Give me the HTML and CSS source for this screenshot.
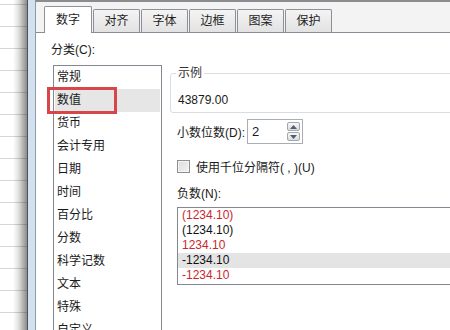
FILE: index.html
```html
<!DOCTYPE html>
<html lang="zh-CN">
<head>
<meta charset="utf-8">
<title>设置单元格格式</title>
<link rel="stylesheet" href="styles.css">
</head>
<body>
<div class="screen">
  <div class="sheet"><div class="shadow"></div></div>
  <div class="frame">
    <div class="dialog">
      <div class="tabs">
        <div class="tab active">数字</div>
        <div class="tab">对齐</div>
        <div class="tab">字体</div>
        <div class="tab">边框</div>
        <div class="tab">图案</div>
        <div class="tab">保护</div>
      </div>
      <div class="panel">
        <div class="left">
          <div class="label">分类(C):</div>
          <div class="catlist">
            <div class="cat">常规</div>
            <div class="cat selected">数值</div>
            <div class="cat">货币</div>
            <div class="cat">会计专用</div>
            <div class="cat">日期</div>
            <div class="cat">时间</div>
            <div class="cat">百分比</div>
            <div class="cat">分数</div>
            <div class="cat">科学记数</div>
            <div class="cat">文本</div>
            <div class="cat">特殊</div>
            <div class="cat">自定义</div>
          </div>
        </div>
        <div class="right">
          <fieldset class="sample">
            <legend>示例</legend>
            <div class="sample-value">43879.00</div>
          </fieldset>
          <div class="decimals">
            <span class="dec-label">小数位数(D):</span>
            <div class="spin">
              <span class="spin-value">2</span>
              <div class="spin-btns">
                <div class="spin-btn"><svg width="7" height="4" viewBox="0 0 7 4"><path d="M0 4 L3.5 0 L7 4 Z" fill="#4e5d78"/></svg></div>
                <div class="spin-btn"><svg width="7" height="4" viewBox="0 0 7 4"><path d="M0 0 L7 0 L3.5 4 Z" fill="#4e5d78"/></svg></div>
              </div>
            </div>
          </div>
          <div class="check-row">
            <span class="checkbox"></span>
            <span>使用千位分隔符( , )(U)</span>
          </div>
          <div class="label neg-label">负数(N):</div>
          <div class="neglist">
            <div class="neg red">(1234.10)</div>
            <div class="neg">(1234.10)</div>
            <div class="neg red">1234.10</div>
            <div class="neg selected">-1234.10</div>
            <div class="neg red">-1234.10</div>
          </div>
        </div>
      </div>
    </div>
  </div>
  <div class="callout"></div>
</div>
</body>
</html>
```
FILE: styles.css
```css
html, body {
  margin: 0;
  padding: 0;
  background: #ffffff;
}

body {
  font-family: "Liberation Sans", "Noto Sans CJK SC", sans-serif;
  font-size: 12px;
  color: #1a1a1a;
}

.screen {
  position: relative;
  width: 450px;
  height: 330px;
  overflow: hidden;
  display: flex;
}

.sheet {
  position: relative;
  flex: none;
  width: 27px;
  height: 330px;
  background-color: #ffffff;
  background-image: repeating-linear-gradient(to bottom, transparent 0 21px, #d6d6d6 21px 22px);
  background-position: 0 -17px;
}

.shadow {
  position: absolute;
  top: 0;
  right: 0;
  width: 14px;
  height: 100%;
  background: linear-gradient(to right, rgba(0,0,0,0), rgba(0,0,0,0.12) 40%, rgba(0,0,0,0.45));
}

.frame {
  flex: none;
  display: flex;
  border-left: 1px solid #4f5358;
  padding-left: 7px;
  background: #d3e0ee;
}

.dialog {
  flex: none;
  width: 440px;
  border-left: 1px solid #8d99a6;
  border-top: 2px solid #8a8c90;
  background: #ffffff;
  display: flex;
  flex-direction: column;
  overflow: hidden;
}

.tabs {
  flex: none;
  display: flex;
  align-items: flex-end;
  gap: 1px;
  height: 30px;
  padding-left: 8px;
  background: #f3f3f3;
  border-bottom: 1px solid #898c95;
}

.tab {
  box-sizing: border-box;
  width: 47px;
  height: 23px;
  border: 1px solid #8e9097;
  border-bottom: none;
  border-radius: 2px 2px 0 0;
  background: linear-gradient(to bottom, #f4f4f4, #e2e2e2);
  text-align: center;
  line-height: 22px;
  color: #1e1e1e;
}

.tab.active {
  width: 48px;
  height: 27px;
  margin-bottom: -1px;
  background: #ffffff;
  line-height: 26px;
  padding-bottom: 3px;
}

.panel {
  display: flex;
  align-items: flex-start;
  padding: 9px 0 0 15px;
  background: #ffffff;
  flex: 1;
}

.label {
  line-height: 16px;
  height: 16px;
}

.left {
  flex: none;
}

.catlist {
  margin: 7px 0 0 2px;
  width: 107px;
  height: 290px;
  border: 1px solid #828790;
  padding-top: 0;
}

.cat {
  height: 23px;
  line-height: 23px;
  padding-left: 2px;
  margin: 0 1px;
}

.cat.selected {
  background: #e6e6e6;
}

.right {
  flex: none;
  width: 300px;
  margin-left: 8px;
  margin-top: 23px;
}

.sample {
  margin: 0;
  padding: 11px 0 4px 5px;
  border: 1px solid #d8dde2;
  border-radius: 3px;
  min-width: 0;
}

.sample legend {
  padding: 0 2px;
  line-height: 16px;
  color: #333333;
}

.sample-value {
  padding-left: 2px;
  line-height: 16px;
}

.decimals {
  display: flex;
  align-items: center;
  height: 25px;
  margin-top: 6px;
  padding-left: 7px;
}

.dec-label {
  flex: none;
  width: 70px;
  white-space: nowrap;
}

.spin {
  flex: none;
  box-sizing: border-box;
  width: 56px;
  height: 25px;
  border: 1px solid #abadb3;
  display: flex;
  align-items: center;
  justify-content: space-between;
  padding: 0 2px 0 4px;
  background: #ffffff;
}

.spin-value {
  font-size: 13px;
}

.spin-btns {
  display: flex;
  flex-direction: column;
  gap: 1px;
}

.spin-btn {
  box-sizing: border-box;
  width: 13px;
  height: 9px;
  border: 1px solid #a3a6ad;
  border-radius: 2px;
  background: linear-gradient(to bottom, #f7f7f7, #dcdcdc);
  display: flex;
  align-items: center;
  justify-content: center;
}

.spin-btn svg {
  display: block;
}

.check-row {
  display: flex;
  align-items: center;
  height: 16px;
  margin-top: 14px;
  padding-left: 7px;
  gap: 6px;
}

.checkbox {
  box-sizing: border-box;
  width: 13px;
  height: 13px;
  border: 1px solid #8f8f8f;
  background: linear-gradient(135deg, #dcdcdc, #f2f2f2);
  box-shadow: inset 0 0 0 1px #f4f4f4;
}

.neg-label {
  margin-top: 12px;
  padding-left: 7px;
}

.neglist {
  margin: 5px 0 0 7px;
  width: 300px;
  border: 1px solid #828790;
  padding: 0 0 1px 0;
}

.neg {
  height: 15px;
  line-height: 15px;
  padding-left: 4px;
  color: #111111;
}

.neg.red {
  color: #c8282e;
}

.neg.selected {
  background: #e4e4e4;
}

.callout {
  position: absolute;
  left: 47px;
  top: 87px;
  width: 64px;
  height: 21px;
  border: 3px solid #d6464b;
}
```
